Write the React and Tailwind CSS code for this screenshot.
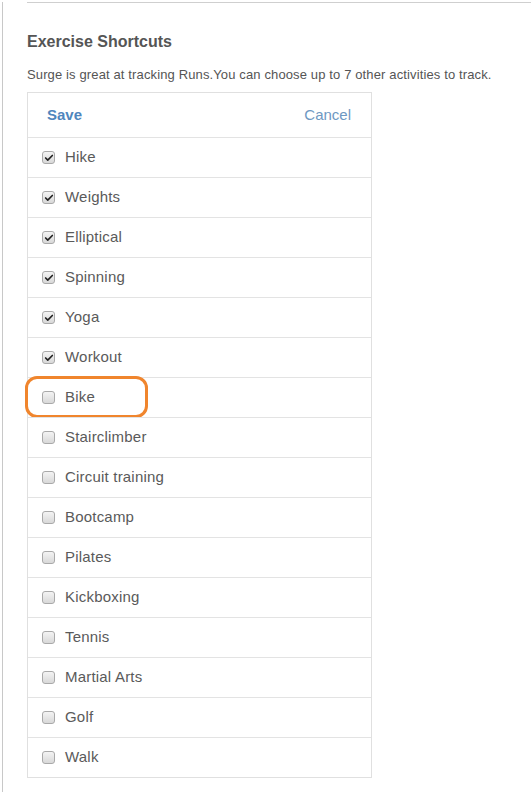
import { Check } from "lucide-react";

const activities = [
  { name: "Hike", on: true },
  { name: "Weights", on: true },
  { name: "Elliptical", on: true },
  { name: "Spinning", on: true },
  { name: "Yoga", on: true },
  { name: "Workout", on: true },
  { name: "Bike", on: false, marked: true },
  { name: "Stairclimber", on: false },
  { name: "Circuit training", on: false },
  { name: "Bootcamp", on: false },
  { name: "Pilates", on: false },
  { name: "Kickboxing", on: false },
  { name: "Tennis", on: false },
  { name: "Martial Arts", on: false },
  { name: "Golf", on: false },
  { name: "Walk", on: false },
];

const Box = ({ on }) => (
  <span className="w-[13px] h-[13px] rounded-[3px] border border-[#a9a9a9] bg-gradient-to-b from-[#f4f4f4] to-[#d8d8d8] flex items-center justify-center shrink-0">
    {on && <Check className="w-[10px] h-[10px] text-[#222]" strokeWidth={4} />}
  </span>
);

const ActivityRow = ({ item }) => (
  <div className="relative h-[40px] border-t border-[#e3e3e3] flex items-center gap-[10px] pl-[14px]">
    <Box on={item.on} />
    <span className="text-[15px] text-[#5a5a5a] tracking-[0.2px]">{item.name}</span>
    {item.marked && (
      <div className="absolute left-[-3px] top-[-2px] w-[123px] h-[42px] border-[3px] border-[#f0852d] rounded-[12px] pointer-events-none" />
    )}
  </div>
);

export default function App() {
  return (
    <div className="min-h-[792px] bg-white font-['Liberation_Sans',Arial,sans-serif] border-l border-[#c8c8c8] ml-[2px]">
      <div className="ml-[24px] border-t border-[#cfcfcf] mt-[2px]" />
      <div className="pl-[24px] pt-[29px]">
        <h2 className="text-[16px] font-bold text-[#555] leading-[20px]">Exercise Shortcuts</h2>
        <p className="mt-[15px] text-[13px] text-[#555] leading-[16px] tracking-[0.13px]">
          Surge is great at tracking Runs.You can choose up to 7 other activities to track.
        </p>
        <div className="mt-[9px] w-[345px] border border-[#e0e0e0]">
          <div className="h-[44px] flex items-center justify-between pl-[19px] pr-[20px]">
            <span className="text-[15px] font-bold text-[#4f86bd]">Save</span>
            <span className="text-[15px] text-[#6e98c2]">Cancel</span>
          </div>
          {activities.map((a) => (
            <ActivityRow key={a.name} item={a} />
          ))}
        </div>
      </div>
    </div>
  );
}
